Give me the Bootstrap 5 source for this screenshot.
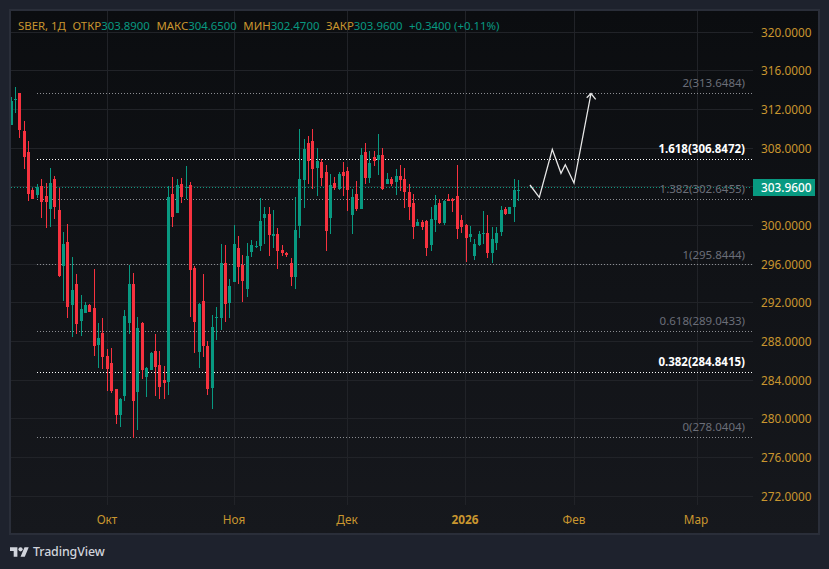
<!doctype html>
<html lang="ru">
<head>
<meta charset="utf-8">
<title>SBER</title>
<link href="https://cdn.jsdelivr.net/npm/bootstrap@5.3.0/dist/css/bootstrap.min.css" rel="stylesheet">
<style>
html,body{height:100%;}
body{background:#1e222d;margin:0;overflow:hidden;font-family:"Noto Sans","Liberation Sans",sans-serif;font-size:11.8px;}
.shot{width:829px;height:569px;padding:9px 9px 0 9px;}
.frame{height:526px;border:2px solid #2a2e39;background:linear-gradient(180deg,#0b0d10 0%,#16181d 100%);position:relative;}
.plotwrap{width:742px;height:522px;flex:none;}
.plotsvg{display:block;}
.legend{left:7px;top:6px;height:17px;line-height:17px;white-space:nowrap;color:#c9962f;font-size:11.4px;}
.legend b{font-weight:400;color:#089981;}
.legitem{margin-right:6.5px;}
.yaxis{width:66px;padding-top:1.7px;flex:none;}
.ytick{height:38.67px;line-height:38.67px;color:#c9962f;padding-left:8px;}
.lastbadge{left:0;top:168px;width:62px;height:17px;line-height:17px;background:#089981;color:#fff;padding-left:8px;font-weight:500;}
.brand{height:34px;padding-left:1px;color:#d1d4dc;font-size:12.4px;font-weight:500;letter-spacing:-.1px;}
.fl{font-size:11.5px;text-anchor:end;fill:#6b6e78;}
.fl.hi{fill:#fff;font-weight:700;}
.tl{font-size:11.8px;text-anchor:middle;fill:#c9962f;}
.tl.yr{font-weight:700;}
</style>
</head>
<body>
<div class="shot d-flex flex-column">
  <div class="frame d-flex flex-row">
    <div class="plotwrap position-relative">
      <svg class="plotsvg" id="plot" width="742" height="522" viewBox="11 11 742 522" xmlns="http://www.w3.org/2000/svg"></svg>
      <div class="legend position-absolute d-flex">
        <span class="legitem">SBER, 1Д</span>
        <span class="legitem">ОТКР<b>303.8900</b></span>
        <span class="legitem">МАКС<b>304.6500</b></span>
        <span class="legitem">МИН<b>302.4700</b></span>
        <span class="legitem">ЗАКР<b>303.9600</b></span>
        <span><b>+0.3400 (+0.11%)</b></span>
      </div>
    </div>
    <div class="yaxis position-relative">
      <div class="ytick">320.0000</div><div class="ytick">316.0000</div><div class="ytick">312.0000</div>
      <div class="ytick">308.0000</div><div class="ytick"></div><div class="ytick">300.0000</div>
      <div class="ytick">296.0000</div><div class="ytick">292.0000</div><div class="ytick">288.0000</div>
      <div class="ytick">284.0000</div><div class="ytick">280.0000</div><div class="ytick">276.0000</div>
      <div class="ytick">272.0000</div>
      <div class="lastbadge position-absolute">303.9600</div>
    </div>
  </div>
  <div class="brand d-flex align-items-center gap-1">
    <svg width="19" height="15" viewBox="0 0 36 28" xmlns="http://www.w3.org/2000/svg" fill="#d1d4dc"><path d="M14 22H7V11H0V4h14v18zM28 22h-8l7.5-18h8L28 22z"/><circle cx="20" cy="8" r="4"/></svg>
    <span>TradingView</span>
  </div>
</div>
<script src="https://cdn.jsdelivr.net/npm/bootstrap@5.3.0/dist/js/bootstrap.bundle.min.js"></script>
<script>
// each candle: g/r, wickTop, bodyTop, bodyBottom, wickBottom (pixel rows)
var D=[
"g,97,101,125,125","g,87,99,100,113","r,93,93,130,138","r,121,131,157,169","r,141,152,194,201","r,188,190,199,199",
"g,184,187,195,198","r,179,186,202,218","r,183,196,202,228","g,168,183,209,227","r,176,179,207,219","r,188,210,276,277",
"g,232,244,266,301","r,224,242,307,318","g,257,290,305,337","r,274,284,324,334","g,295,309,321,336","g,302,305,313,313",
"r,304,305,312,312","r,269,308,346,356","g,323,338,345,368","r,318,333,357,369","r,349,356,369,391","r,348,363,391,393",
"r,389,389,415,424","g,398,399,415,427","g,310,316,396,401","g,265,284,323,334","r,273,284,401,438","g,317,328,392,430",
"r,322,323,370,379","g,367,368,377,397","g,352,353,370,370","r,334,351,367,396","r,351,365,387,399","r,366,380,383,399",
"g,186,197,382,395","r,177,194,217,227","g,179,185,213,213","r,178,184,197,203","g,166,187,188,199","r,182,185,270,317",
"r,266,268,322,353","g,303,304,352,368","r,274,301,346,357","r,341,346,389,395","g,315,327,388,409","g,307,317,318,340",
"g,244,263,318,330","r,245,263,304,322","g,279,286,303,318","g,225,244,282,282","r,236,248,267,284","r,255,265,281,302",
"g,243,256,289,297","g,240,245,252,257","g,241,246,247,248","g,198,221,246,251","g,207,214,218,244","r,207,214,235,256",
"g,210,234,236,248","r,228,234,251,269","r,245,250,253,256","r,252,253,255,257","r,258,263,277,286","g,197,230,277,289",
"g,129,179,226,238","g,139,149,180,208","r,136,143,161,184","r,129,141,169,189","g,148,161,168,196","r,159,162,178,186",
"r,165,172,231,251","g,174,185,218,234","r,177,183,188,190","g,172,174,189,190","r,162,172,176,196","r,167,171,190,211",
"g,189,197,215,234","r,181,194,209,211","g,148,155,209,209","r,143,152,178,184","g,151,163,178,183","r,151,157,161,166",
"g,134,155,160,175","r,148,155,189,190","g,173,179,184,184","r,177,179,184,186","g,169,176,182,195","r,165,176,180,191",
"r,168,179,192,208","r,184,192,207,220","r,194,203,227,239","g,219,222,226,226","r,220,222,227,230","r,220,221,248,256",
"g,207,219,245,251","g,195,205,220,232","r,199,203,223,224","g,200,201,223,225","r,194,199,201,201","r,198,199,201,212",
"r,165,196,229,239","r,215,220,227,233","r,224,225,238,262","g,226,234,237,242","g,239,244,256,260","g,231,234,245,246",
"g,211,233,234,244","r,215,233,253,258","g,227,239,253,263","g,227,233,243,250","g,206,210,232,236","r,207,209,214,215",
"g,207,207,214,214","g,179,190,207,222","g,180,190,191,201"];
var GREEN="#089981",RED="#f7323f",GRID="#212328";
var s="";
function hl(y,c,dash,x1,x2){return '<line x1="'+x1+'" x2="'+x2+'" y1="'+y+'" y2="'+y+'" stroke="'+c+'" stroke-width="1"'+(dash?' stroke-dasharray="'+dash+'"':'')+'/>';}
[32.5,70.5,109.5,148.5,186.5,225.5,264.5,302.5,341.5,380.5,418.5,457.5,496.5].forEach(function(y){s+=hl(y,GRID,"",11,753);});
[107.5,234.5,347.5,465.5,574.5,697.5].forEach(function(x){s+='<line x1="'+x+'" x2="'+x+'" y1="11" y2="505" stroke="'+GRID+'"/>';});
[[93.5,"#8b8d92"],[159.5,"#ffffff"],[199.5,"#8b8d92"],[264.5,"#8b8d92"],[331.5,"#8b8d92"],[372.5,"#ffffff"],[437.5,"#8b8d92"]].forEach(function(f){s+=hl(f[0],f[1],"1 2",37,752);});
s+=hl(187.5,"#0f9a82","1 2",11,752);
D.forEach(function(r,i){var p=r.split(","),c=p[0]=="g"?GREEN:RED,a=+p[1],b=+p[2],e=+p[3],f=+p[4],x=Math.floor(11+4.375*i);
 s+='<rect x="'+x+'" y="'+a+'" width="1" height="'+(f-a)+'" fill="'+c+'" shape-rendering="crispEdges"/>';
 s+='<rect x="'+(x-1)+'" y="'+b+'" width="3" height="'+Math.max(1,e-b)+'" fill="'+c+'" shape-rendering="crispEdges"/>';
});
s+='<polyline fill="none" stroke="#e8e8e8" stroke-width="1.3" points="530,185 539.3,197.3 552.3,149.3 561,173.3 565.3,164.7 574,183 591,93.5"/>';
s+='<polyline fill="none" stroke="#e8e8e8" stroke-width="1.3" points="586.7,97.8 591,93.5 595.7,99.3"/>';
[["2(313.6484)",87,0],["1.618(306.8472)",153,1],["1.382(302.6455)",193,0],["1(295.8444)",259,0],["0.618(289.0433)",325,0],["0.382(284.8415)",366,1],["0(278.0404)",431,0]].forEach(function(l){
 s+='<text class="fl'+(l[2]?' hi':'')+'" x="745" y="'+l[1]+'">'+l[0]+'</text>';});
[["Окт",107,0],["Ноя",234,0],["Дек",347,0],["2026",465,1],["Фев",574,0],["Мар",696,0]].forEach(function(l){
 s+='<text class="tl'+(l[2]?' yr':'')+'" x="'+l[1]+'" y="524">'+l[0]+'</text>';});
document.getElementById("plot").innerHTML=s;
</script>
</body>
</html>
